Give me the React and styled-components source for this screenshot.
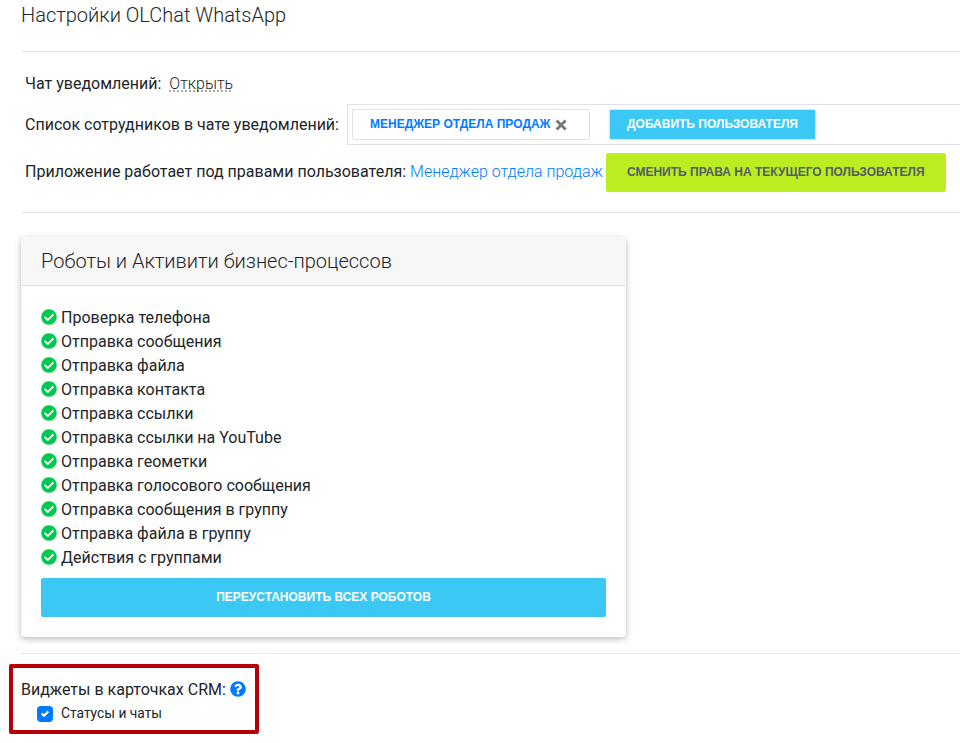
import React, { useState } from "react";
import styled, { createGlobalStyle } from "styled-components";
import { FaCheckCircle, FaQuestionCircle } from "react-icons/fa";

const GlobalStyle = createGlobalStyle`
  * { box-sizing: border-box; }
  body {
    margin: 0;
    background: #fff;
    color: #212529;
    font: 400 16px/24px Roboto, sans-serif;
    overflow: hidden;
  }
`;

const Page = styled.main`
  height: 743px;
  padding-left: 21px;
  overflow: hidden;
`;

const Title = styled.h1`
  margin: 0;
  padding-top: 3px;
  height: 51px;
  font-size: 20px;
  font-weight: 300;
  line-height: 24px;
`;

const Divider = styled.hr`
  margin: 0;
  border: 0;
  border-top: 1px solid rgba(0, 0, 0, 0.1);
`;

const Settings = styled.section`
  height: 160px;
  padding: 20px 0 0 4px;
`;

const Row = styled.div`
  display: flex;
  align-items: center;
  white-space: nowrap;
  height: ${(p) => p.$height}px;
  margin-top: ${(p) => p.$gap || 0}px;
`;

const DottedLink = styled.a`
  margin-left: 8px;
  font-weight: 300;
  text-decoration: underline dotted #aaa 1.5px;
  text-underline-offset: 1px;
  text-decoration-skip-ink: none;
`;

const UserList = styled.div`
  display: flex;
  align-items: center;
  flex: 1;
  height: 41px;
  margin-left: 8px;
  padding-left: 4px;
  border: 1px solid #dee2e6;
  border-right: 0;
`;

const Button = styled.button`
  display: flex;
  align-items: center;
  justify-content: center;
  flex: none;
  height: 39px;
  padding: 0;
  border: 0;
  border-radius: 2px;
  font: 700 12px/16px "Liberation Sans", sans-serif;
  text-transform: uppercase;
  white-space: nowrap;
`;

const UserChip = styled(Button)`
  justify-content: flex-start;
  width: 238px;
  height: 31px;
  padding: 0 0 2px 17px;
  color: #007bff;
  background: #fff;
  border: 1px solid #dee2e6;
`;

const RemoveIcon = styled.svg`
  width: 12px;
  height: 12px;
  margin: 3px 0 0 5px;
`;

const AddButton = styled(Button)`
  width: 207px;
  height: 31px;
  margin-left: 19px;
  padding-bottom: 2px;
  color: #fff;
  background: #3bc8f5;
  border: 1px solid #dee2e6;
`;

const RightsButton = styled(Button)`
  width: 340px;
  margin-left: 3px;
  padding-bottom: 2px;
  color: #535c69;
  background: #bbed21;
`;

const RightsLabel = styled.span`
  padding-bottom: 2px;
`;

const UserLink = styled.a`
  margin-left: 4px;
  font-weight: 300;
  color: #007bff;
`;

const Card = styled.section`
  width: 605px;
  height: 400px;
  margin: 24px 0 16px;
  border-radius: 4px;
  overflow: hidden;
  box-shadow: 0 2px 5px rgba(0, 0, 0, 0.16), 0 2px 10px rgba(0, 0, 0, 0.12);
`;

const CardHeader = styled.h2`
  height: 49px;
  margin: 0;
  padding: 12px 20px;
  background: #f7f7f7;
  border-bottom: 1px solid #dfdfdf;
  font-size: 20px;
  font-weight: 300;
  line-height: 24px;
`;

const CardBody = styled.div`
  padding: 20px;
`;

const RobotList = styled.ul`
  margin: 0 0 8px;
  padding: 0;
  list-style: none;
`;

const Robot = styled.li`
  display: flex;
  align-items: center;
  gap: 4px;
  height: 24px;

  svg { color: #00c851; margin-bottom: 2px; }
`;

const ReinstallButton = styled(Button)`
  width: 100%;
  padding-bottom: 2px;
  color: #fff;
  background: #3bc8f5;
`;

const WidgetBox = styled.section`
  width: 250px;
  height: 70px;
  margin: 10px 0 0 -12px;
  padding: 10px 0 0 8px;
  border: 4px solid #b30009;
  border-radius: 2px;
`;

const WidgetTitle = styled.div`
  display: flex;
  align-items: center;
  gap: 4px;
  height: 24px;

  svg { color: #007bff; margin-bottom: 2px; }
`;

const CheckLabel = styled.label`
  display: flex;
  align-items: center;
  gap: 8px;
  height: 22px;
  padding-left: 16px;
  font-size: 13.8px;
`;

const HiddenCheckbox = styled.input`
  appearance: none;
  width: 0;
  height: 0;
  margin: 0 -8px 0 0;
`;

const CheckMark = styled.svg`
  width: 16px;
  height: 16px;
  margin-top: 2px;
`;

const robots = [
  "Проверка телефона",
  "Отправка сообщения",
  "Отправка файла",
  "Отправка контакта",
  "Отправка ссылки",
  "Отправка ссылки на YouTube",
  "Отправка геометки",
  "Отправка голосового сообщения",
  "Отправка сообщения в группу",
  "Отправка файла в группу",
  "Действия с группами",
];

export default function App() {
  const [enabled, setEnabled] = useState(true);

  return (
    <>
      <GlobalStyle />
      <Page>
        <Title>Настройки OLChat WhatsApp</Title>
        <Divider />
        <Settings>
          <Row $height={24}>
            Чат уведомлений: <DottedLink>Открыть</DottedLink>
          </Row>
          <Row $height={41} $gap={8}>
            Список сотрудников в чате уведомлений:
            <UserList>
              <UserChip>
                Менеджер отдела продаж
                <RemoveIcon viewBox="0 0 12 12">
                  <path d="M1.6 1.6 10.6 10.6M10.6 1.6 1.6 10.6" stroke="#777" strokeWidth="2.8" />
                </RemoveIcon>
              </UserChip>
              <AddButton>Добавить пользователя</AddButton>
            </UserList>
          </Row>
          <Row $height={39} $gap={8}>
            <RightsLabel>
              Приложение работает под правами пользователя:
              <UserLink>Менеджер отдела продаж</UserLink>
            </RightsLabel>
            <RightsButton>Сменить права на текущего пользователя</RightsButton>
          </Row>
        </Settings>
        <Divider />
        <Card>
          <CardHeader>Роботы и Активити бизнес-процессов</CardHeader>
          <CardBody>
            <RobotList>
              {robots.map((name) => (
                <Robot key={name}>
                  <FaCheckCircle size={16} />
                  {name}
                </Robot>
              ))}
            </RobotList>
            <ReinstallButton>Переустановить всех роботов</ReinstallButton>
          </CardBody>
        </Card>
        <Divider />
        <WidgetBox>
          <WidgetTitle>
            Виджеты в карточках CRM:
            <FaQuestionCircle size={16} />
          </WidgetTitle>
          <CheckLabel>
            <HiddenCheckbox
              type="checkbox"
              checked={enabled}
              onChange={() => setEnabled(!enabled)}
            />
            <CheckMark viewBox="0 0 16 16">
              <rect width="16" height="16" rx="4" fill={enabled ? "#007bff" : "#adb5bd"} />
              {enabled && (
                <path
                  transform="translate(4 4)"
                  fill="#fff"
                  d="M6.564.75l-3.59 3.612-1.538-1.55L0 4.26l2.974 2.99L8 2.193z"
                />
              )}
            </CheckMark>
            Статусы и чаты
          </CheckLabel>
        </WidgetBox>
      </Page>
    </>
  );
}
